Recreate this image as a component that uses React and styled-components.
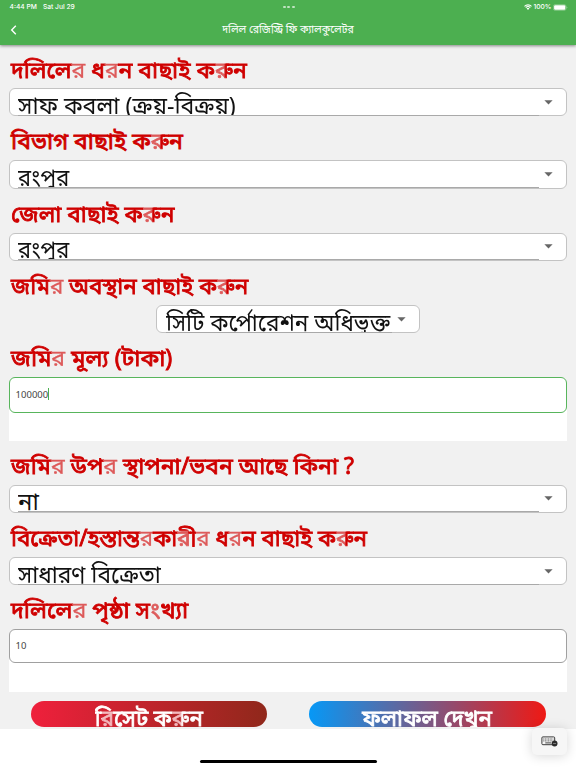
import React from 'react';
//Styled
import styled, { createGlobalStyle } from 'styled-components';

const App = () => {
  return (
    <>
      <GlobalStyle />
      <StyledPage>
        <StyledHeader>
          <StyledStatusBar>
            <StyledStatusSide>
              <span>4:44 PM</span>
              <span>Sat Jul 29</span>
            </StyledStatusSide>
            <StyledDots><i /><i /><i /></StyledDots>
            <StyledStatusSide $right>
              <WifiIcon />
              <span>100%</span>
              <BatteryIcon />
            </StyledStatusSide>
          </StyledStatusBar>
          <StyledNav>
            <BackIcon />
            <StyledTitle>দলিল রেজিস্ট্রি ফি ক্যালকুলেটর</StyledTitle>
          </StyledNav>
        </StyledHeader>

        <StyledForm>
          <Label first scale={0.997}>দলিলে<Ra /> ধ<Ra />ন বাছাই ক<Ru />ন</Label>
          <Select scale={0.965}>সাফ কবলা (ক্রয়-বিক্রয়)</Select>
          <Label>বিভাগ বাছাই ক<Ru />ন</Label>
          <Select scale={0.91}>রংপুর</Select>
          <Label scale={0.985}>জেলা বাছাই ক<Ru />ন</Label>
          <Select scale={0.91}>রংপুর</Select>
          <Label scale={0.972}>জমি<Ra /> অবস্থান বাছাই ক<Ru />ন</Label>
          <Select compact scale={0.94}>সিটি কর্পোরেশন অধিভুক্ত</Select>
          <Label scale={1.008}>জমি<Ra /> মূল্য (টাকা)</Label>
          <StyledField $height="63.2px">
            <StyledInput $focused>100000<StyledCaret /></StyledInput>
          </StyledField>
          <Label scale={0.997}>জমি<Ra /> উপ<Ra /> স্থাপনা/ভবন আছে কিনা ?</Label>
          <Select>না</Select>
          <Label scale={0.971}>বিক্রেতা/হস্তান্ত<Ra />কা<StyledShade $from="#dd5a5a 55%" $to="#cf0000 60%" $top="#cf0000">রী</StyledShade><Ra /> ধ<Ra />ন বাছাই ক<Ru />ন</Label>
          <Select scale={0.947}>সাধারণ বিক্রেতা</Select>
          <Label scale={1.01}>দলিলে<Ra /> পৃষ্ঠা <StyledShade $from="#cf0000 62%" $to="#dd5a5a 63%">সং</StyledShade>খ্যা</Label>
          <StyledField $height="63.2px">
            <StyledInput>10</StyledInput>
          </StyledField>
          <StyledActions>
            <StyledButton $from="#ef203c" $to="#90281b">
              <Fit center scale={0.967}>
                <StyledShade $from="#fff 34%" $to="#f3b9be 38%" $top="#fff">রি</StyledShade>
                সেট ক
                <StyledShade $from="#f3b9be 50%" $to="#fff 55%">রু</StyledShade>
                ন
              </Fit>
            </StyledButton>
            <StyledButton $from="#0698f6" $to="#ef1914">
              <Fit center scale={0.967}>ফলাফল দেখুন</Fit>
            </StyledButton>
          </StyledActions>
        </StyledForm>

        <StyledFooter>
          <StyledHomeBar />
        </StyledFooter>
        <StyledKeyboardButton>
          <KeyboardIcon />
        </StyledKeyboardButton>
      </StyledPage>
    </>
  );
}

//Text pieces
const Ra = () => <StyledFaint>র</StyledFaint>;
const Ru = () => <StyledShade $from="#dd5a5a 50%" $to="#cf0000 55%">রু</StyledShade>;

const Fit = ({ children, scale, center }) => (
  <StyledFit $scale={scale} $center={center}>{children}</StyledFit>
);

const Label = ({ children, first, scale }) => (
  <StyledLabel $first={first}>
    <Fit scale={scale}>{children}</Fit>
  </StyledLabel>
);

const Select = ({ children, compact, scale }) => (
  <StyledSelect $compact={compact}>
    <StyledValue>
      <Fit scale={scale}>{children}</Fit>
    </StyledValue>
    <svg width="9" height="5" viewBox="0 0 9 5">
      <path d="M0.4 0.3h8.2L4.5 4.6z" fill="#666" />
    </svg>
  </StyledSelect>
);

//Icons
const BackIcon = () => (
  <svg width="8" height="12" viewBox="0 0 8 12">
    <path d="M6.8 1.8L2.7 6L6.8 10.2" fill="none" stroke="#fff" strokeWidth="1.4" />
  </svg>
);

const WifiIcon = () => (
  <svg width="8" height="6" viewBox="0 0 16 12">
    <path d="M1 4.6a10 10 0 0 1 14 0M3.5 7.3a6.4 6.4 0 0 1 9 0" fill="none" stroke="#fff" strokeWidth="2.2" />
    <path d="M8 11.8L5.3 9a3.8 3.8 0 0 1 5.4 0z" fill="#fff" />
  </svg>
);

const BatteryIcon = () => (
  <svg width="15" height="7" viewBox="0 0 15 7">
    <rect x="0.4" y="0.6" width="12.6" height="5.8" rx="1.7" fill="none" stroke="#fff" strokeOpacity="0.45" strokeWidth="0.6" />
    <rect x="1.1" y="1.2" width="11.2" height="4.6" rx="1" fill="#fff" />
    <path d="M13.7 2.5v2c.8-.3.8-1.7 0-2z" fill="#fff" fillOpacity="0.6" />
  </svg>
);

const KeyboardIcon = () => (
  <svg width="17" height="11" viewBox="0 0 17 11">
    <rect x="0.9" y="0.9" width="12.8" height="7.8" rx="1" fill="none" stroke="#3a3a3a" />
    <path d="M2.3 3h10M2.3 4.9h10" stroke="#555" strokeWidth="1" strokeDasharray="1 0.6" />
    <path d="M4.3 6.9h6" stroke="#444" strokeWidth="1" />
    <circle cx="13.6" cy="7.5" r="2.9" fill="#2b2b2b" />
    <path d="M12.1 7.5h3" stroke="#999" strokeWidth="0.7" />
  </svg>
);

const GlobalStyle = createGlobalStyle`
  * {
    box-sizing: border-box;
  }
  body {
    margin: 0;
    background: #fff;
    font-family: "Noto Sans", "Noto Sans Bengali", sans-serif;
  }
`;

const StyledPage = styled.div`
  position: relative;
  width: 576px;
  height: 768px;
  display: flex;
  flex-direction: column;
  overflow: hidden;
  background: #fff;
`;

const StyledHeader = styled.header`
  position: relative;
  height: 45px;
  flex: none;
  background: #4caf50;
  box-shadow: 0 1px 3px rgba(0, 0, 0, 0.45);
  color: #fff;
`;

const StyledStatusBar = styled.div`
  display: grid;
  grid-template-columns: 1fr auto 1fr;
  align-items: center;
  height: 14px;
  padding: 0 8px 0 9.5px;
  font-family: Inter, sans-serif;
  font-size: 6.7px;
  font-weight: 500;
`;

const StyledStatusSide = styled.div`
  display: flex;
  align-items: center;
  justify-content: ${({ $right }) => ($right ? 'flex-end' : 'flex-start')};
  gap: ${({ $right }) => ($right ? '1.5px' : '6px')};
`;

const StyledDots = styled.div`
  display: flex;
  gap: 1.8px;

  i {
    width: 2.8px;
    height: 2.8px;
    border-radius: 50%;
    background: rgba(255, 255, 255, 0.65);
  }
`;

const StyledNav = styled.div`
  display: grid;
  grid-template-columns: 8px 1fr 8px;
  align-items: center;
  height: 31px;
  padding: 0 9px;
`;

const StyledTitle = styled.h1`
  margin: 0;
  padding-bottom: 1px;
  text-align: center;
  font-size: 10.5px;
  font-weight: 400;
`;

const StyledForm = styled.main`
  height: 684px;
  flex: none;
  padding: 0 8.6px;
  background: #f1f1f1;
`;

const StyledFit = styled.span`
  display: inline-block;
  white-space: nowrap;
  transform-origin: ${({ $center }) => ($center ? '50%' : '0')} 50%;
  transform: scaleX(${({ $scale }) => $scale || 1});
`;

const StyledLabel = styled.h2`
  display: flex;
  align-items: center;
  height: ${({ $first }) => ($first ? '43px' : '44px')};
  margin: 0;
  padding: 4px 0 0 2.5px;
  font-size: 23px;
  line-height: 34px;
  font-weight: 400;
  -webkit-text-stroke: 0.85px;
  color: #cf0000;
`;

const StyledFaint = styled.span`
  color: #dd5a5a;
  -webkit-text-stroke: 0.3px;
`;

const StyledShade = styled.span`
  background:
    linear-gradient(${({ $top }) => `${$top || 'transparent'}, ${$top || 'transparent'}`}) 0 0 / 100% 30% no-repeat,
    linear-gradient(90deg, ${({ $from }) => $from}, ${({ $to }) => $to});
  background-clip: text;
  color: transparent;
  -webkit-text-stroke: 0.8px;
`;

const StyledSelect = styled.div`
  display: flex;
  justify-content: space-between;
  align-items: center;
  width: ${({ $compact }) => ($compact ? '264px' : 'auto')};
  height: 28.35px;
  margin: 0 auto;
  padding: 0 13.5px 0 8.5px;
  border: 1px solid #c3c3c3;
  border-radius: 6px;
  background: #fff;
`;

const StyledValue = styled.div`
  flex: 1;
  width: 0;
  height: 27px;
  margin-right: 5px;
  overflow: hidden;
  border-bottom: 1px solid #a9a9a9;
  font-size: 24px;
  line-height: 32px;
  color: #111;
`;

const StyledField = styled.div`
  height: ${({ $height }) => $height};
  background: linear-gradient(#f1f1f1 12px, #fff 12px);
`;

const StyledInput = styled.div`
  display: flex;
  align-items: center;
  height: ${({ $focused }) => ($focused ? '36px' : '34px')};
  padding: 0 6px 2px;
  border: 1px solid ${({ $focused }) => ($focused ? '#58b55c' : '#a0a0a0')};
  border-radius: 6px;
  background: #fff;
  font-size: 9.5px;
  color: #444;
`;

const StyledCaret = styled.span`
  width: 1px;
  height: 12px;
  background: #4caf50;
`;

const StyledActions = styled.div`
  display: flex;
  gap: 42px;
  padding: 8.6px 0 0 22px;
`;

const StyledButton = styled.button`
  display: flex;
  justify-content: center;
  align-items: flex-start;
  width: 236.5px;
  height: 25.6px;
  padding: 0;
  border: 0;
  border-radius: 13px;
  overflow: hidden;
  background: linear-gradient(90deg, ${({ $from }) => $from}, ${({ $to }) => $to});
  font-family: inherit;
  font-size: 23px;
  line-height: 32px;
  font-weight: 400;
  -webkit-text-stroke: 0.85px;
  color: #fff;
`;

const StyledFooter = styled.footer`
  display: flex;
  justify-content: center;
  align-items: flex-end;
  flex: 1;
  padding-bottom: 5px;
`;

const StyledHomeBar = styled.div`
  width: 177px;
  height: 3px;
  border-radius: 2px;
  background: #000;
`;

const StyledKeyboardButton = styled.div`
  position: absolute;
  right: 9.5px;
  bottom: 13px;
  display: flex;
  justify-content: center;
  align-items: center;
  width: 35px;
  height: 27px;
  border-radius: 5px;
  background: #f6f6f6;
  box-shadow: 0 1px 12px rgba(0, 0, 0, 0.16);
`;

export default App;
